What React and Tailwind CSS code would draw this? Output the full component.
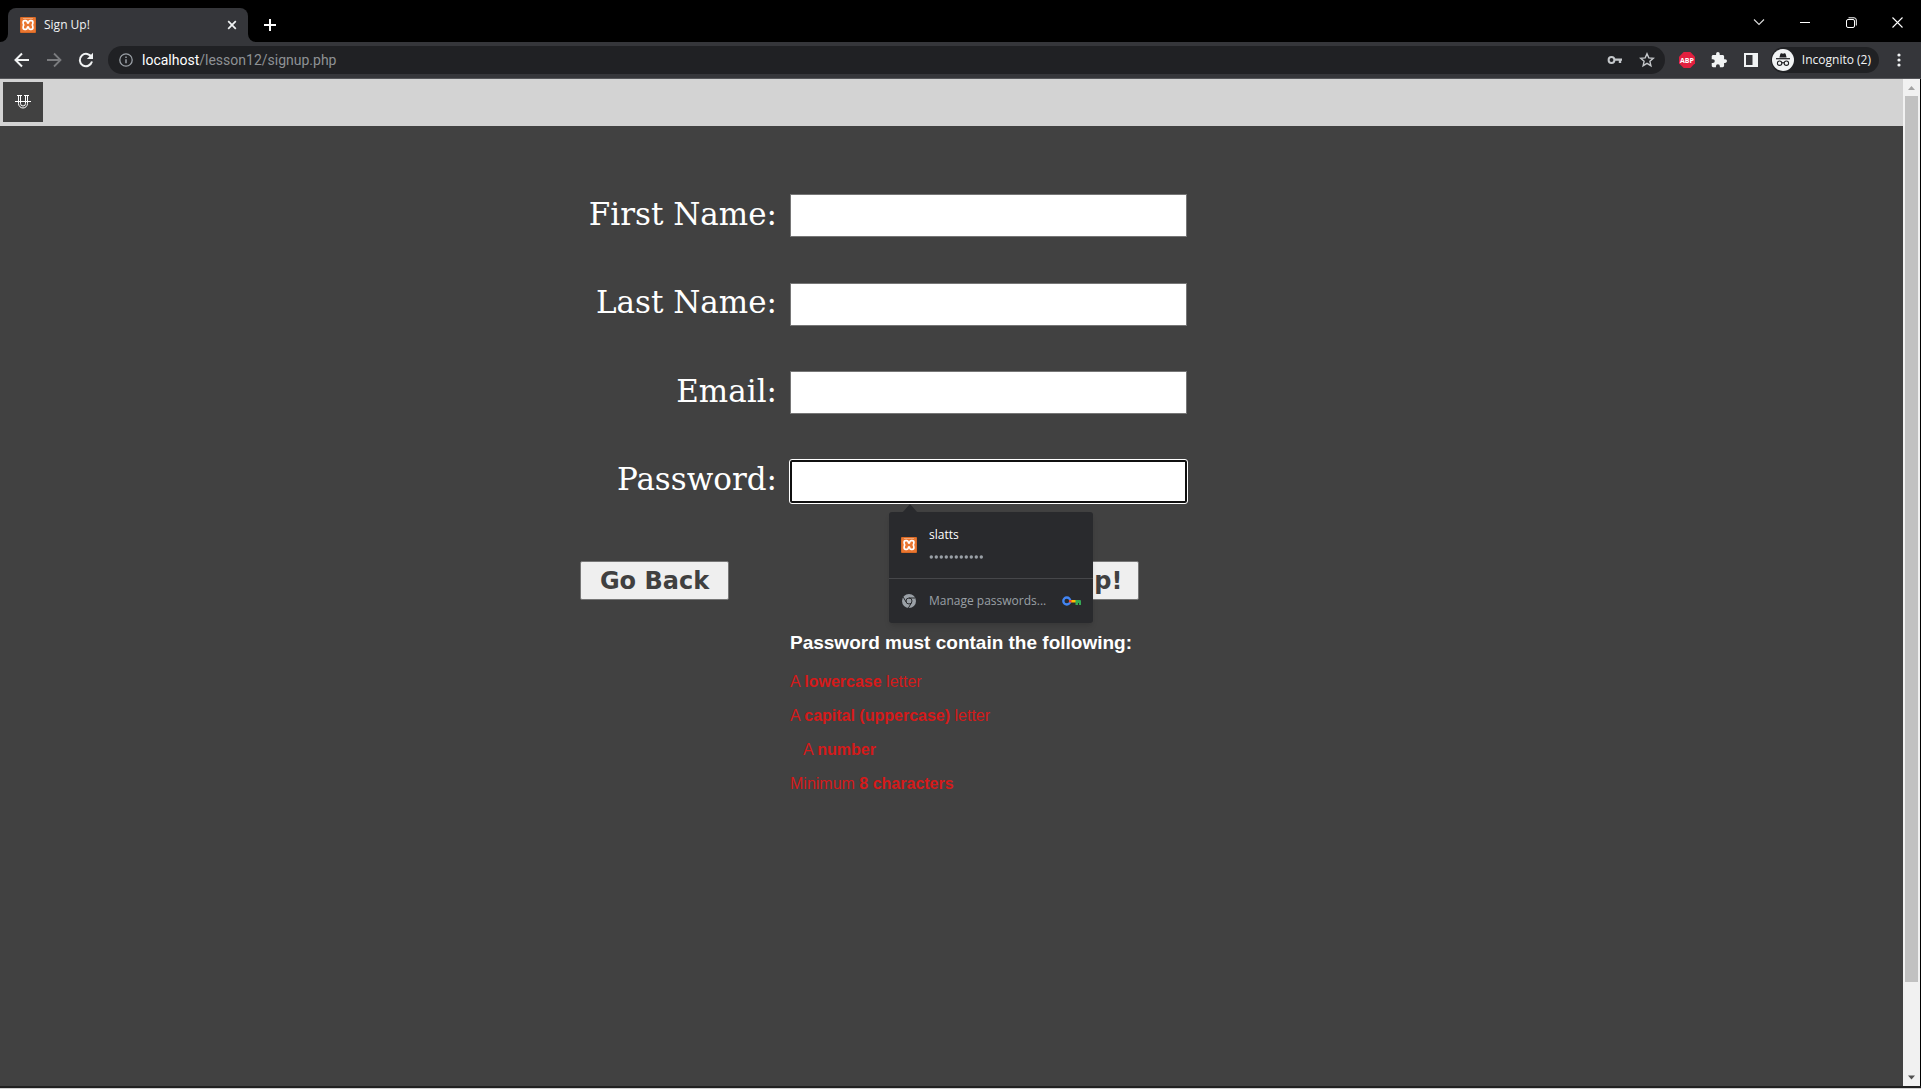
import React from "react";

const UI_FONT = "font-['Open_Sans','Noto_Sans',sans-serif]";

function XamppIcon() {
  return (
    <svg width="16" height="16" viewBox="0 0 16 16" className="shrink-0" aria-hidden="true">
      <rect width="16" height="16" rx="1" fill="#d96a26" />
      <rect x="1" y="1" width="14" height="14" fill="#ea7630" />
      <rect x="3" y="1" width="10" height="1" fill="#f2a673" />
      <path
        d="M4.800 3.700H5.800Q6.900 3.700 7.100 4.700Q7.400 6.200 8 6.200Q8.600 6.200 8.900 4.700Q9.100 3.700 10.200 3.700H11.200Q12.900 3.700 12.900 5.300Q12.900 7.300 12.200 8Q12.900 8.700 12.900 10.700Q12.900 12.300 11.200 12.300H10.200Q9.100 12.300 8.900 11.300Q8.600 9.800 8 9.800Q7.400 9.800 7.100 11.300Q6.900 12.300 5.800 12.300H4.800Q3.100 12.300 3.100 10.700Q3.100 8.700 3.800 8Q3.100 7.300 3.100 5.300Q3.100 3.700 4.800 3.700Z"
        fill="none"
        stroke="#fff"
        strokeWidth="1.700"
        strokeLinejoin="round"
      />
    </svg>
  );
}

function IconButton({ label, children, className = "" }) {
  return (
    <button type="button" aria-label={label} className={`flex shrink-0 items-center justify-center ${className}`}>
      {children}
    </button>
  );
}

function TabStrip() {
  return (
    <header className="flex h-[42px] items-end bg-black text-white">
      <div className="flex h-[34px] w-2 shrink-0 items-end bg-[#35363a]">
        <div className="h-full w-full rounded-br-lg bg-black" />
      </div>
      <div className="flex h-[34px] w-60 shrink-0 items-center rounded-t-lg bg-[#35363a] pl-3 pr-2">
        <XamppIcon />
        <span className="ml-2 flex-1 text-xs text-[#f1f3f4]">Sign Up!</span>
        <IconButton label="Close tab" className="size-4">
          <svg width="16" height="16" viewBox="0 0 16 16" stroke="#f1f3f4" strokeWidth="1.7">
            <path d="M4.200 4.200l7.600 7.600M11.800 4.200l-7.600 7.600" />
          </svg>
        </IconButton>
      </div>
      <div className="h-[34px] w-2 shrink-0 bg-[#35363a]">
        <div className="h-full w-full rounded-bl-lg bg-black" />
      </div>
      <IconButton label="New tab" className="h-[34px] w-7">
        <svg width="14" height="14" viewBox="0 0 14 14" stroke="#fff" strokeWidth="2">
          <path d="M7 1v12M1 7h12" />
        </svg>
      </IconButton>
      <div className="ml-auto mr-px flex h-[42px] items-start">
        <IconButton label="Search tabs" className="h-11 w-[46px]">
          <svg width="12" height="12" viewBox="0 0 12 12" fill="none" stroke="#ddd" strokeWidth="1.1">
            <path d="M1 3.500l5 5 5-5" />
          </svg>
        </IconButton>
        <IconButton label="Minimize" className="h-11 w-[46px]">
          <svg width="10" height="10" viewBox="0 0 10 10" stroke="#fff">
            <path d="M0 5.500h10" />
          </svg>
        </IconButton>
        <IconButton label="Restore" className="h-11 w-[46px]">
          <svg width="11" height="11" viewBox="0 0 11 11" fill="none" stroke="#fff">
            <rect x="0.5" y="2.5" width="8" height="8" rx="1.5" />
            <path d="M2.500 0.800H8Q10.300 0.800 10.300 3V8.500" />
          </svg>
        </IconButton>
        <IconButton label="Close" className="h-11 w-[46px]">
          <svg width="11" height="11" viewBox="0 0 11 11" stroke="#fff" strokeWidth="1.1">
            <path d="M0.500 0.500l10 10M10.500 0.500l-10 10" />
          </svg>
        </IconButton>
      </div>
    </header>
  );
}

function Toolbar() {
  return (
    <nav className="flex h-[37px] items-center border-b border-[#55565a] bg-[#35363a] pl-3">
      <IconButton label="Back" className="size-5">
        <svg width="20" height="20" viewBox="0 0 20 20" fill="none" stroke="#f1f3f4" strokeWidth="2">
          <path d="M17 10H4M10 3.500L3.500 10l6.500 6.500" />
        </svg>
      </IconButton>
      <IconButton label="Forward" className="ml-3 size-5">
        <svg width="20" height="20" viewBox="0 0 20 20" fill="none" stroke="#7b7c7f" strokeWidth="1.8">
          <path d="M3 10h13M10 3.500l6.500 6.500L10 16.500" />
        </svg>
      </IconButton>
      <IconButton label="Reload" className="ml-3 size-5">
        <svg width="20" height="20" viewBox="0 0 20 20" fill="none" stroke="#f1f3f4" strokeWidth="2">
          <path d="M15.600 7.300A6.200 6.200 0 1 0 16 11.600" />
          <path d="M17 2.800V9h-6.200z" fill="#f1f3f4" stroke="none" />
        </svg>
      </IconButton>
      <div className="ml-3 flex h-7 flex-1 items-center rounded-full bg-[#202124] pl-[11px] pr-[10px]">
        <svg width="14" height="14" viewBox="0 0 14 14" fill="none" stroke="#9aa0a6" strokeWidth="1.3" aria-hidden="true">
          <circle cx="7" cy="7" r="6.200" />
          <path d="M7 6.200v4M7 3.600v1.400" strokeWidth="1.500" />
        </svg>
        <span className="ml-[9px] font-['Roboto',sans-serif] text-sm text-[#8e9195]">
          <span className="text-white">localhost</span>/lesson12/signup.php
        </span>
        <IconButton label="Saved passwords" className="ml-auto size-4">
          <svg width="16" height="16" viewBox="0 0 16 16" fill="none" stroke="#c4c7ca" strokeWidth="2">
            <circle cx="4.500" cy="8" r="2.900" />
            <path d="M7.400 7.600H15M13 8v3" strokeWidth="2.400" />
          </svg>
        </IconButton>
        <IconButton label="Bookmark this tab" className="ml-4 size-4">
          <svg width="16" height="16" viewBox="0 0 16 16" fill="none" stroke="#c4c7ca" strokeWidth="1.400">
            <path d="M8 1.800l1.800 4.100 4.500.4-3.400 3 1 4.400L8 11.400l-3.900 2.300 1-4.400-3.400-3 4.500-.4z" />
          </svg>
        </IconButton>
      </div>
      <IconButton label="Adblock Plus" className="ml-[14px] size-4">
        <svg width="16" height="16" viewBox="0 0 16 16">
          <path d="M4.700 0h6.600L16 4.700v6.600L11.300 16H4.700L0 11.300V4.700z" fill="#e21f3f" />
          <text x="8" y="10.500" textAnchor="middle" fontSize="7" fontWeight="700" fill="#fff" fontFamily="Open Sans">ABP</text>
        </svg>
      </IconButton>
      <IconButton label="Extensions" className="ml-4 size-4">
        <svg width="16" height="16" viewBox="1 1 22 22" fill="#f1f3f4">
          <path d="M20.500 11H19V7c0-1.100-.9-2-2-2h-4V3.500a2.500 2.500 0 0 0-5 0V5H4c-1.100 0-2 .9-2 2v3.800h1.500a2.700 2.700 0 0 1 0 5.400H2V20c0 1.100.9 2 2 2h3.800v-1.500a2.700 2.700 0 0 1 5.400 0V22H17c1.100 0 2-.9 2-2v-4h1.500a2.500 2.500 0 0 0 0-5z" />
        </svg>
      </IconButton>
      <IconButton label="Side panel" className="ml-4 size-4">
        <svg width="14" height="14" viewBox="0 0 14 14">
          <rect width="14" height="14" fill="#f1f3f4" />
          <rect x="2" y="2" width="6.500" height="10" fill="#35363a" />
        </svg>
      </IconButton>
      <button type="button" className="ml-3 flex h-[26px] items-center rounded-full bg-[#202124] pl-px pr-2 text-xs text-[#f1f3f4]">
        <svg width="22" height="22" viewBox="0 0 22 22" aria-hidden="true">
          <circle cx="11" cy="11" r="11" fill="#f1f3f4" />
          <path d="M7.400 8.500L8.400 4.700Q8.700 4 9.500 4.300L11 4.700l1.500-.4Q13.300 4 13.600 4.700l1 3.800z" fill="#202124" />
          <path d="M4 9.700h14" stroke="#202124" strokeWidth="1.200" />
          <g fill="none" stroke="#202124" strokeWidth="1.100">
            <circle cx="7.600" cy="14.200" r="2.200" />
            <circle cx="14.400" cy="14.200" r="2.200" />
            <path d="M9.800 14q1.200-.8 2.400 0" />
          </g>
        </svg>
        <span className="ml-2">Incognito (2)</span>
      </button>
      <IconButton label="Menu" className="ml-3 mr-[14px] size-4">
        <svg width="16" height="16" viewBox="0 0 16 16" fill="#f1f3f4">
          <circle cx="8" cy="3" r="1.600" />
          <circle cx="8" cy="8" r="1.600" />
          <circle cx="8" cy="13" r="1.600" />
        </svg>
      </IconButton>
    </nav>
  );
}

function PasswordPopup() {
  return (
    <div className={`absolute left-[99px] top-[52px] z-10 w-[204px] rounded-[3px] bg-[#292a2d] shadow-md ${UI_FONT}`}>
      <svg width="16" height="9" viewBox="0 0 16 9" className="absolute -top-2 left-[13px]" aria-hidden="true">
        <path d="M0 9l8-9 8 9z" fill="#292a2d" />
      </svg>
      <button type="button" className="flex h-[66px] w-full items-center px-3 text-left">
        <XamppIcon />
        <span className="ml-3 flex flex-col gap-2 text-xs leading-4">
          <span className="text-white">slatts</span>
          <span className="flex h-3 items-center gap-px" aria-label="Hidden password">
            {Array.from({ length: 11 }, (_, i) => (
              <svg key={i} width="4" height="4" viewBox="0 0 4 4">
                <circle cx="2.300" cy="2" r="1.700" fill="#9aa0a6" />
              </svg>
            ))}
          </span>
        </span>
      </button>
      <button type="button" className="flex h-[45px] w-full items-center border-t border-[#46474a] pl-3 pr-3 text-left">
        <svg width="16" height="16" viewBox="0 0 16 16" className="shrink-0" aria-hidden="true">
          <circle cx="8" cy="8" r="7" fill="#9aa0a6" />
          <g fill="none" stroke="#292a2d">
            <circle cx="8" cy="8" r="3" />
            <path d="M8 5h6.200M5.400 9.500L2.300 4.200M10.600 9.500L7.400 15" />
          </g>
        </svg>
        <span className="ml-3 flex-1 whitespace-nowrap text-xs text-[#9aa0a6]">Manage passwords...</span>
        <svg width="19" height="10" viewBox="0 0 19 10" className="shrink-0" aria-hidden="true">
          <circle cx="4.800" cy="5" r="3.500" fill="none" stroke="#4285f4" strokeWidth="2.300" />
          <path d="M7 4h3v2.500H7z" fill="#ea4335" />
          <path d="M9.500 4H14v2.500H9.500z" fill="#fbbc04" />
          <path d="M13.500 4H18q1 0 1 1v4h-2V7h-1v2h-2.500z" fill="#34a853" />
        </svg>
      </button>
    </div>
  );
}

const fields = [
  { id: "first", label: "First Name:", type: "text" },
  { id: "last", label: "Last Name:", type: "text" },
  { id: "email", label: "Email:", type: "email" },
  { id: "password", label: "Password:", type: "password" },
];

function SignUpForm() {
  const buttonStyle =
    "h-[39px] w-[149px] rounded-[2px] border border-[#767676] bg-[#efefef] font-['DejaVu_Sans',sans-serif] text-2xl leading-8 font-bold text-[#404040]";
  return (
    <form className="w-[743px] pt-[68px]" onSubmit={(e) => e.preventDefault()}>
      <div className="flex h-[309px] flex-col justify-between">
        {fields.map((f) => (
          <div key={f.id} className="flex h-[43px] items-center gap-[13px]">
            <label
              htmlFor={f.id}
              className="w-[197px] pb-1 text-right font-['DejaVu_Serif',serif] text-[31px] leading-9 whitespace-nowrap text-white"
            >
              {f.label}
            </label>
            <div className="relative">
              <input
                id={f.id}
                type={f.type}
                className={
                  f.id === "password"
                    ? "block h-[43px] w-[397px] rounded-[2px] border-2 border-[#101010] bg-white px-2 outline outline-white"
                    : "block h-[43px] w-[397px] border border-[#767676] bg-white px-2 outline-none"
                }
              />
              {f.id === "password" && <PasswordPopup />}
            </div>
          </div>
        ))}
      </div>
      <div className="mt-[58px] flex gap-[261px]">
        <button type="button" className={buttonStyle}>Go Back</button>
        <button type="submit" className={buttonStyle}>Sign Up!</button>
      </div>
      <section className="ml-[210px] mt-8 font-['Liberation_Sans',Arial,sans-serif]">
        <h3 className="text-[19px] leading-[22px] font-bold text-white">Password must contain the following:</h3>
        <div className="mt-[19px] flex flex-col gap-4 text-base leading-[18px] text-[#d41a1a]">
          <p>A <b>lowercase</b> letter</p>
          <p>A <b>capital (uppercase)</b> letter</p>
          <p className="pl-[13px]">A <b>number</b></p>
          <p>Minimum <b>8 characters</b></p>
        </div>
      </section>
    </form>
  );
}

function Scrollbar() {
  return (
    <div className="flex w-[17px] shrink-0 flex-col items-center bg-[#f1f1f1]" aria-hidden="true">
      <svg width="17" height="17" viewBox="0 0 17 17">
        <path d="M5 11l3.500-4 3.500 4z" fill="#a3a3a3" />
      </svg>
      <div className="w-[13px] grow-[886] bg-[#c1c1c1]" />
      <div className="grow-[87]" />
      <svg width="17" height="17" viewBox="0 0 17 17">
        <path d="M5 6.500l3.500 4 3.500-4z" fill="#505050" />
      </svg>
    </div>
  );
}

export default function App() {
  return (
    <div className={`flex min-h-screen flex-col ${UI_FONT}`}>
      <TabStrip />
      <Toolbar />
      <div className="flex flex-1 border-r border-black">
        <div className="flex min-w-0 flex-1 flex-col bg-[#414141]">
          <div className="h-[47px] bg-[#d3d3d3] pl-[3px] pt-[3px]">
            <a href="#home" aria-label="Home" className="flex size-10 items-center justify-center bg-[#414141]">
              <svg width="16" height="16" viewBox="0 0 16 16" fill="none" stroke="#fff" strokeWidth="1">
                <path d="M2 1.500h5M9 1.500h5M3.500 1.500v8a4.500 4.500 0 0 0 9 0v-8M5.500 1.500v8a2.500 2.500 0 0 0 5 0v-8M0 7.500h16" />
              </svg>
            </a>
          </div>
          <main className="flex flex-1 justify-center">
            <SignUpForm />
          </main>
        </div>
        <Scrollbar />
      </div>
      <div className="h-[3px] border-b border-[#d0d0d0] bg-[#202020]" />
    </div>
  );
}
